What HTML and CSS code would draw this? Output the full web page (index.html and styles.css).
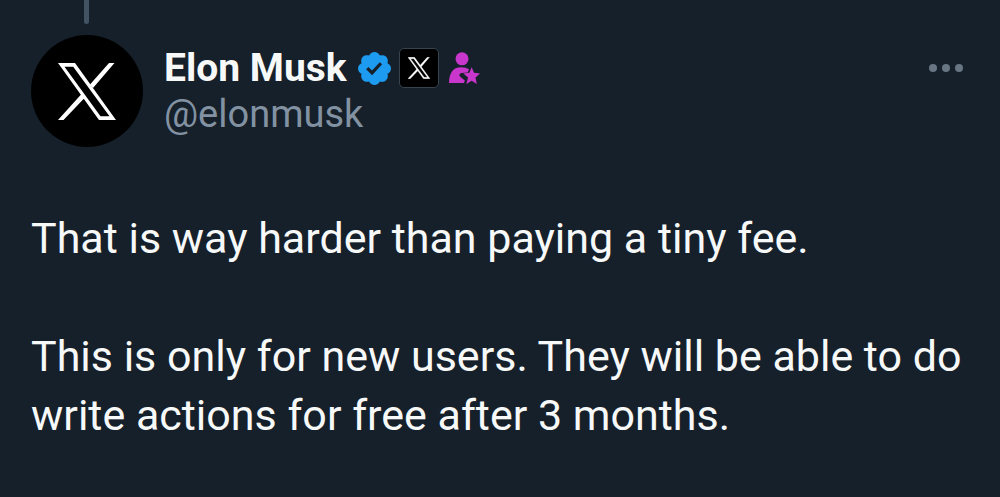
FILE: index.html
```html
<!DOCTYPE html>
<html lang="en">

<head>
    <meta charset="UTF-8">
    <meta name="viewport" content="width=device-width, initial-scale=1.0">
    <title>Elon Musk on X</title>
    <link rel="stylesheet" href="styles.css">
</head>

<body>
    <svg class="defs" aria-hidden="true">
        <symbol id="x-logo" viewBox="0 0 58 57">
            <path fill-rule="evenodd" d="M0 0H17L58 57H41ZM6.500 3.800L42.500 53.200H51.500L15.200 3.800Z" />
            <path d="M51 0H56.500L35 25L32 21.500ZM0 57H5.500L26.500 35L23.500 31Z" />
        </symbol>
    </svg>

    <article class="post">
        <div class="thread-line"></div>
        <header class="post-header">
            <a class="avatar" href="#" aria-label="Elon Musk">
                <svg><use href="#x-logo" /></svg>
            </a>
            <div class="author">
                <div class="name-row">
                    <a class="name" href="#">Elon Musk</a>
                    <svg class="verified" viewBox="1.6 1.6 18.8 18.8">
                        <path d="M20.396 11c-.018-.646-.215-1.275-.57-1.816-.354-.54-.852-.972-1.438-1.246.223-.607.27-1.264.14-1.897-.131-.634-.437-1.218-.882-1.687-.47-.445-1.053-.75-1.687-.882-.633-.13-1.29-.083-1.897.14-.273-.587-.704-1.086-1.245-1.44S11.647 1.62 11 1.604c-.646.017-1.273.213-1.813.568s-.969.854-1.24 1.44c-.608-.223-1.267-.272-1.902-.14-.635.13-1.22.436-1.69.882-.445.47-.749 1.055-.878 1.688-.13.633-.08 1.29.144 1.896-.587.274-1.087.705-1.443 1.245-.356.54-.555 1.17-.574 1.817.02.647.218 1.276.574 1.817.356.54.856.972 1.443 1.245-.224.606-.274 1.263-.144 1.896.13.634.433 1.218.877 1.688.47.443 1.054.747 1.687.878.633.132 1.29.084 1.897-.136.274.586.705 1.084 1.246 1.439.54.354 1.17.551 1.816.569.647-.016 1.276-.213 1.817-.567s.972-.854 1.245-1.44c.604.239 1.266.296 1.903.164.636-.132 1.22-.447 1.68-.907.46-.46.776-1.044.908-1.681s.075-1.299-.165-1.903c.586-.274 1.084-.705 1.439-1.246.354-.54.551-1.17.569-1.816zM9.662 14.85l-3.429-3.428 1.293-1.302 2.072 2.072 4.4-4.794 1.347 1.246z" />
                    </svg>
                    <span class="affiliate">
                        <svg><use href="#x-logo" /></svg>
                    </span>
                    <svg class="subscriber" viewBox="0 0 31 33">
                        <circle cx="13" cy="6.800" r="6.500" />
                        <path d="M0 31C0 21 4 15.200 12 15.200C15.500 15.200 18 16 20 17.200L18.700 20.400L12.500 21C10.500 21.300 9.800 23.500 11.300 24.800L15.800 28.500L15 31Z" />
                        <path d="M22.700 15.200L25 20.800L31 21.400L26.500 25.600L27.800 32L22.700 28.700L17.400 32L19 25.600L14.300 21.500L20.300 20.800Z" />
                    </svg>
                </div>
                <a class="handle" href="#">@elonmusk</a>
            </div>
            <button class="more" type="button" aria-label="More">
                <svg viewBox="0 0 36 8">
                    <circle cx="5" cy="4" r="4" />
                    <circle cx="18" cy="4" r="4" />
                    <circle cx="31" cy="4" r="4" />
                </svg>
            </button>
        </header>
        <div class="post-text">
            <p>That is way harder than paying a tiny fee.</p>
            <p>This is only for new users. They will be able to do write actions for free after 3 months.</p>
        </div>
    </article>
</body>

</html>
```

FILE: styles.css
```css
body {
    margin: 0;
    background-color: #16202a;
    color: #f7f9f9;
    font-family: Roboto, "Liberation Sans", sans-serif;
}

a {
    color: inherit;
    text-decoration: none;
}

.defs {
    display: none;
}

.post {
    padding: 0 31px;
}

.thread-line {
    width: 5px;
    height: 24px;
    margin-left: 53px;
    border-radius: 0 0 3px 3px;
    background: #425364;
}

.post-header {
    display: flex;
    align-items: flex-start;
    padding-top: 11px;
}

.avatar {
    display: flex;
    flex-shrink: 0;
    align-items: center;
    justify-content: center;
    width: 112px;
    height: 112px;
    border-radius: 50%;
    background: #000;
}

.avatar svg {
    width: 58px;
    height: 57px;
    fill: #fff;
}

.author {
    flex: 1;
    margin-left: 21px;
    padding-top: 10px;
}

.name-row {
    display: flex;
    align-items: center;
    gap: 8px;
    height: 46px;
}

.name {
    font-size: 39px;
    font-weight: 700;
    line-height: 46px;
    margin-right: 3px;
}

.verified {
    width: 33px;
    height: 33px;
    fill: #1d9bf0;
}

.affiliate {
    display: flex;
    align-items: center;
    justify-content: center;
    box-sizing: border-box;
    width: 40px;
    height: 40px;
    border: 1px solid #38444d;
    border-radius: 5px;
    background: #000;
}

.affiliate svg {
    width: 22px;
    height: 22px;
    fill: #fff;
    stroke: #fff;
    stroke-width: 1px;
}

.subscriber {
    width: 31px;
    height: 33px;
    margin-left: 2px;
    fill: #c936cc;
}

.handle {
    display: block;
    color: #8292a2;
    font-size: 38px;
    line-height: 46px;
}

.more {
    margin: 29px 5px 0 0;
    padding: 0;
    border: none;
    background: none;
    cursor: pointer;
}

.more svg {
    display: block;
    width: 36px;
    height: 8px;
    fill: #687684;
}

.post-text {
    margin-top: 62px;
    font-size: 43px;
    line-height: 59px;
}

.post-text p {
    margin: 0 0 59px;
}
```
